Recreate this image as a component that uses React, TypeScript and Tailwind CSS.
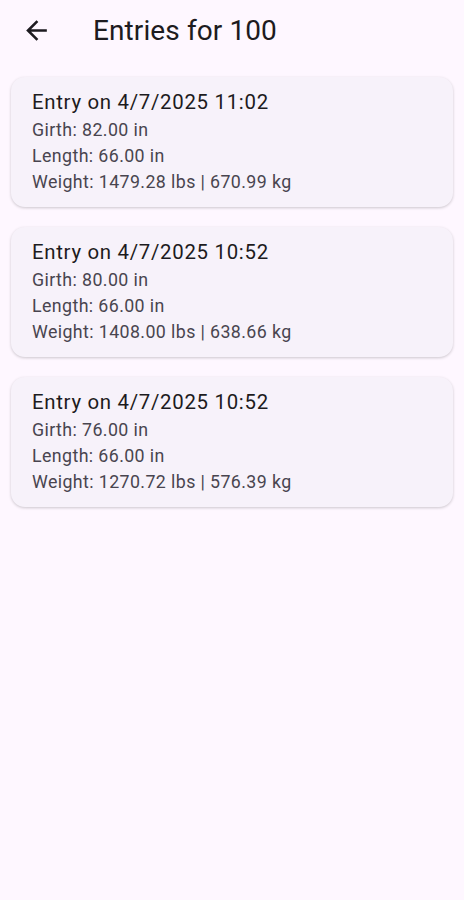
interface Entry {
  date: string;
  girth: string;
  length: string;
  weight: string;
}

const entries: Entry[] = [
  { date: '4/7/2025 11:02', girth: '82.00', length: '66.00', weight: '1479.28 lbs | 670.99 kg' },
  { date: '4/7/2025 10:52', girth: '80.00', length: '66.00', weight: '1408.00 lbs | 638.66 kg' },
  { date: '4/7/2025 10:52', girth: '76.00', length: '66.00', weight: '1270.72 lbs | 576.39 kg' },
];

function BackArrow() {
  return (
    <svg viewBox="0 0 24 24" className="h-[31px] w-[31px]" fill="currentColor">
      <path d="M20 11H7.83l5.59-5.59L12 4l-8 8 8 8 1.41-1.41L7.83 13H20v-2z" />
    </svg>
  );
}

function EntryCard({ entry }: { entry: Entry }) {
  return (
    <div className="mx-[11px] rounded-[14px] bg-[#f7f2fa] pl-[21px] pr-4 pt-[10px] pb-[12px] shadow-[0_1px_3px_rgba(0,0,0,0.2)]">
      <div className="text-[20.4px] leading-[30px] tracking-[0.7px] text-[#1d1b20]">Entry on {entry.date}</div>
      <div className="text-[17.8px] leading-[26px] tracking-[0.4px] text-[#49454f]">
        <div>Girth: {entry.girth} in</div>
        <div>Length: {entry.length} in</div>
        <div>Weight: {entry.weight}</div>
      </div>
    </div>
  );
}

export default function App() {
  return (
    <div className="min-h-[900px] w-full bg-[#fef7ff] font-['Roboto',sans-serif]">
      <div className="flex h-[61px] items-center">
        <button className="ml-[21px] text-[#1d1b20]">
          <BackArrow />
        </button>
        <h1 className="ml-[41px] text-[28px] tracking-[0.1px] text-[#1d1b20]">Entries for 100</h1>
      </div>
      <div className="mt-[16px] flex flex-col gap-[20px]">
        {entries.map((e, i) => (
          <EntryCard key={i} entry={e} />
        ))}
      </div>
    </div>
  );
}
